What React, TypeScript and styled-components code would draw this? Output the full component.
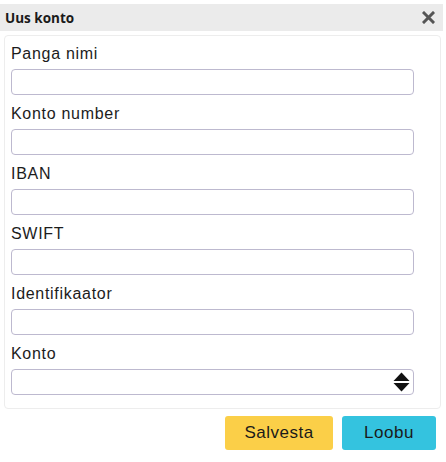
import React from "react";
import styled, { createGlobalStyle } from "styled-components";

const GlobalStyle = createGlobalStyle`
  body {
    margin: 0;
    background: #ffffff;
    font-family: "Liberation Sans", Arial, sans-serif;
  }
`;

const Layout = styled.div`
  width: 446px;
  padding-top: 4px;
`;

const Header = styled.div`
  height: 27px;
  width: 443px;
  background: #ebebeb;
  display: flex;
  align-items: center;
  justify-content: space-between;
  padding: 0 8px 0 5px;
  box-sizing: border-box;
`;

const Title = styled.h1`
  margin: 0;
  font-family: "Open Sans", "Liberation Sans", sans-serif;
  font-size: 13.5px;
  font-weight: 700;
  color: #1a1a1a;
`;

const CloseButton = styled.button`
  border: none;
  background: none;
  padding: 0;
  display: flex;
  cursor: pointer;
`;

const Panel = styled.div`
  margin: 4px 0 0 4px;
  width: 437px;
  box-sizing: border-box;
  border: 1px solid #ededed;
  border-radius: 4px;
  padding: 8px 6px 13px;
  display: flex;
  flex-direction: column;
  gap: 9px;
`;

const Field = styled.div`
  display: flex;
  flex-direction: column;
  gap: 6px;
`;

const Label = styled.label`
  font-size: 16px;
  line-height: 19px;
  letter-spacing: 0.7px;
  color: #1c1c1c;
`;

const Input = styled.input`
  width: 403px;
  height: 26px;
  box-sizing: border-box;
  border: 1px solid #bdb9cf;
  border-radius: 4px;
  padding: 0 6px;
  font-size: 14px;
  font-family: inherit;
  outline: none;
`;

const SelectWrap = styled.div`
  position: relative;
  width: 403px;
`;

const Select = styled.select`
  width: 403px;
  height: 26px;
  box-sizing: border-box;
  border: 1px solid #bdb9cf;
  border-radius: 4px;
  background: #fff;
  appearance: none;
  padding: 0 6px;
  font-size: 14px;
  font-family: inherit;
  outline: none;
`;

const SelectArrows = styled.svg`
  position: absolute;
  right: 4px;
  top: 3px;
  pointer-events: none;
`;

const Actions = styled.div`
  display: flex;
  justify-content: flex-end;
  gap: 9px;
  width: 436px;
  margin-top: 7px;
`;

const Button = styled.button<{ $variant: "save" | "cancel" }>`
  height: 34px;
  width: ${(p) => (p.$variant === "save" ? "108px" : "94px")};
  border: none;
  border-radius: 3px;
  background: ${(p) => (p.$variant === "save" ? "#fbcf48" : "#34c3df")};
  color: #1a1a1a;
  font-family: "Liberation Sans", Arial, sans-serif;
  font-size: 17px;
  letter-spacing: 0.5px;
  padding: 0;
  cursor: pointer;
`;

const fields = ["Panga nimi", "Konto number", "IBAN", "SWIFT", "Identifikaator"];

export default function App() {
  return (
    <Layout>
      <GlobalStyle />
      <Header>
        <Title>Uus konto</Title>
        <CloseButton aria-label="close">
          <svg width="13" height="13" viewBox="0 0 13 13">
            <path
              d="M2 2 L11 11 M11 2 L2 11"
              stroke="#555"
              strokeWidth="3"
              strokeLinecap="square"
            />
          </svg>
        </CloseButton>
      </Header>
      <Panel>
        {fields.map((f) => (
          <Field key={f}>
            <Label>{f}</Label>
            <Input />
          </Field>
        ))}
        <Field>
          <Label>Konto</Label>
          <SelectWrap>
            <Select>
              <option></option>
            </Select>
            <SelectArrows width="17" height="20" viewBox="0 0 17 20">
              <path d="M8.5 0.5 L16.5 9 L0.5 9 Z" fill="#111" />
              <path d="M0.5 11 L16.5 11 L8.5 19.5 Z" fill="#111" />
            </SelectArrows>
          </SelectWrap>
        </Field>
      </Panel>
      <Actions>
        <Button $variant="save">Salvesta</Button>
        <Button $variant="cancel">Loobu</Button>
      </Actions>
    </Layout>
  );
}
